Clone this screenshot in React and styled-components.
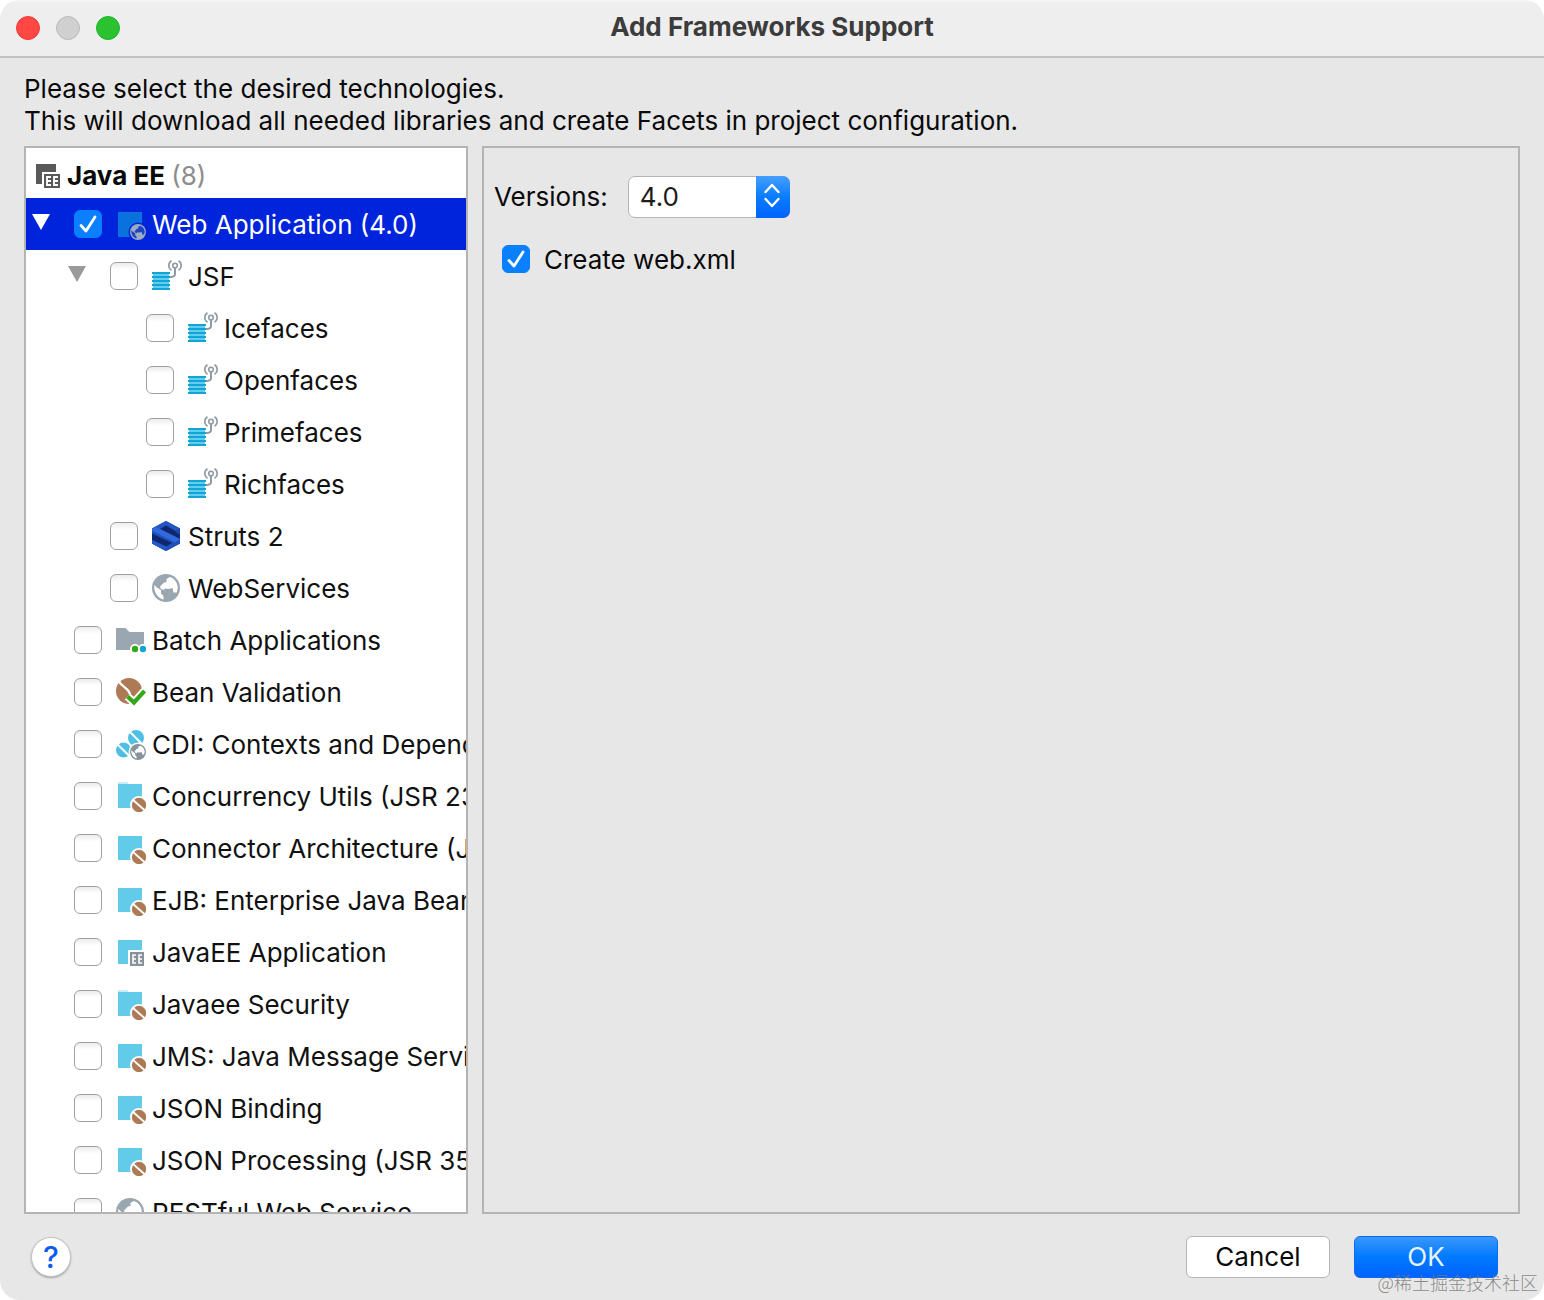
import { useState } from "react";
import styled, { createGlobalStyle, css } from "styled-components";

const GlobalStyle = createGlobalStyle`
  * {
    box-sizing: border-box;
  }

  body {
    margin: 0;
    background: #fff;
    color: #0a0a0a;
    font-family: Inter, Roboto, "Liberation Sans", sans-serif;
    font-size: 26px;
    line-height: 32px;
  }

  button, select, input {
    margin: 0;
    font: inherit;
    color: inherit;
  }
`;

const Dialog = styled.div`
  position: relative;
  display: flex;
  flex-direction: column;
  height: 100vh;
  background: #e7e7e7;
  border-radius: 20px;
  overflow: hidden;
`;

const TitleBar = styled.header`
  display: grid;
  grid-template-columns: 1fr auto 1fr;
  align-items: center;
  height: 58px;
  padding: 0 16px;
  background: #eeeeee;
  box-shadow: inset 0 2px #f6f6f6;
  border-bottom: 2px solid #c2c2c2;
`;

const Lights = styled.div`
  display: flex;
  gap: 16px;
`;

const Light = styled.button`
  width: 24px;
  height: 24px;
  padding: 0;
  border: 1px solid ${(p) => p.$edge};
  border-radius: 50%;
  background: ${(p) => p.$color};
`;

const Title = styled.h1`
  margin: 0;
  padding-bottom: 2px;
  font-size: 26px;
  font-weight: 700;
  color: #3c3c3c;
`;

const Intro = styled.p`
  margin: 0;
  padding: 15px 24px 9px;
`;

const Panels = styled.main`
  display: flex;
  flex: 1;
  gap: 14px;
  min-height: 0;
  padding: 0 24px;
`;

const panel = css`
  border: 2px solid #b4b4b4;
  overflow: hidden;
`;

const TreePanel = styled.section`
  ${panel}
  flex: 0 0 444px;
  background: #fff;
`;

const SettingsPanel = styled.section`
  ${panel}
  flex: 1;
  padding: 28px 10px;
`;

const GroupHeader = styled.h2`
  display: flex;
  align-items: center;
  gap: 7px;
  height: 50px;
  margin: 0;
  padding: 6px 10px 0;
  font-size: 26px;
  font-weight: 700;
`;

const Count = styled.span`
  font-weight: 400;
  color: #8c8c8c;
`;

const Tree = styled.ul`
  margin: 0;
  padding: 0;
  list-style: none;
`;

const Row = styled.li`
  display: flex;
  align-items: center;
  height: 52px;
  padding-left: ${(p) => p.$level * 36}px;
  white-space: nowrap;
  background: ${(p) => (p.$selected ? "#0024dc" : "transparent")};
  color: ${(p) => (p.$selected ? "#fff" : "#111")};
`;

const Slot = styled.div`
  display: flex;
  flex: 0 0 48px;
  padding-left: 6px;
`;

const Toggle = styled.button`
  display: flex;
  padding: 0;
  border: 0;
  background: none;
  color: ${(p) => (p.$selected ? "#fff" : "#9a9a9a")};

  svg {
    transform: ${(p) => (p.$open ? "none" : "rotate(-90deg)")};
  }
`;

const RowLabel = styled.label`
  display: flex;
  align-items: center;
  gap: 6px;
  padding-left: 12px;

  svg {
    flex: none;
  }
`;

const RowName = styled.span`
  padding-top: 2px;
`;

const CheckWrap = styled.span`
  display: grid;
  flex: none;

  > * {
    grid-area: 1 / 1;
  }

  svg {
    pointer-events: none;
  }
`;

const CheckInput = styled.input`
  appearance: none;
  width: 28px;
  height: 28px;
  border: 1px solid #a0a0a0;
  border-radius: 6px;
  background: linear-gradient(#ececec, #fff 7px);

  &:checked {
    border-color: #0a80ff;
    background: #0a80ff;
  }
`;

const VersionRow = styled.div`
  display: flex;
  align-items: center;
  gap: 20px;
`;

const SelectWrap = styled.span`
  display: grid;
  width: 162px;

  > * {
    grid-area: 1 / 1;
  }

  svg {
    justify-self: end;
    pointer-events: none;
  }
`;

const Select = styled.select`
  appearance: none;
  height: 42px;
  padding: 0 46px 0 11px;
  border: 1px solid #b4b4b4;
  border-radius: 7px;
  background: #fff;
  color: #1c1c1c;
`;

const Option = styled.label`
  display: flex;
  align-items: center;
  gap: 14px;
  padding: 24px 8px;
`;

const Footer = styled.footer`
  display: flex;
  align-items: center;
  gap: 24px;
  height: 86px;
  padding: 0 46px 0 31px;
`;

const HelpButton = styled.button`
  width: 40px;
  height: 40px;
  margin-right: auto;
  padding: 0;
  border: 1px solid #c4c4c4;
  border-radius: 50%;
  background: #fff;
  box-shadow: 0 1px 2px rgba(0, 0, 0, 0.3);
  font-size: 30px;
  font-weight: 500;
  color: #0a5cf0;
`;

const Button = styled.button`
  width: 144px;
  height: 42px;
  padding: 0;
  border: 1px solid ${(p) => (p.$primary ? "#0a6cf5" : "#b4b4b4")};
  border-radius: 6px;
  background: ${(p) =>
    p.$primary ? "linear-gradient(#3a98fb, #007aff 50%, #0062ff)" : "#fff"};
  color: ${(p) => (p.$primary ? "#e8f2ff" : "#0a0a0a")};
`;

const Watermark = styled.span`
  position: absolute;
  right: 6px;
  bottom: 5px;
  font: 300 18px/26px "Noto Sans CJK SC", sans-serif;
  color: rgba(120, 120, 120, 0.85);
  pointer-events: none;
`;

function Check({ id, checked, onChange }) {
  return (
    <CheckWrap>
      <CheckInput id={id} type="checkbox" checked={checked} onChange={onChange} />
      {checked && (
        <svg width="28" height="28" viewBox="0 0 28 28" fill="none">
          <path
            d="M7 15.5 12 21 21 7"
            stroke="#fff"
            strokeWidth="2.8"
            strokeLinecap="round"
            strokeLinejoin="round"
          />
        </svg>
      )}
    </CheckWrap>
  );
}

function Icon({ children }) {
  return (
    <svg width="32" height="32" viewBox="0 0 32 32" fill="none" aria-hidden="true">
      {children}
    </svg>
  );
}

// drawn for a 28px circle with its centre at 0,0
function GlobeShape({ ring = "#9aa7b0", land = "#fff" }) {
  return (
    <>
      <circle r="14" fill={ring} />
      <path
        d="M-11.7-3C-12.5 3-9 10-2.500 11.500V8L-5 5.500V2L-8.500 0Z"
        fill={land}
      />
      <path
        d="M-6-1.500-2-5.500.5-6V-9L4-11C8.500-9.500 11.500-5.500 11.800-.5L10.800 4.500H7.500L6.500 0 2.500 1-1 .5-2 2-5 1Z"
        fill={land}
      />
    </>
  );
}

function GlobeIcon() {
  return (
    <Icon>
      <g transform="translate(16 16)">
        <GlobeShape />
      </g>
    </Icon>
  );
}

function WebIcon() {
  return (
    <Icon>
      <path d="M4 4h24v25H4z" fill="#0a72dc" />
      <circle cx="24" cy="24" r="9.500" fill="#0024dc" />
      <g transform="translate(24 24) scale(.57)">
        <GlobeShape ring="#9dabc0" land="#1a44c8" />
      </g>
    </Icon>
  );
}

function JsfIcon() {
  return (
    <Icon>
      <path d="M3 12h16v18H3z" fill="#62cdf0" />
      <path d="M2 13h18M2 17h18M2 21h18M2 25h18M2 29h18" stroke="#12a5d3" strokeWidth="2" />
      <g stroke="#8e9ba5" strokeWidth="1.600">
        <circle cx="25" cy="5.500" r="2.300" />
        <path d="M25 8v6Q25 17 20 17" strokeWidth="2" />
        <path d="M21.500.8Q18.800 2.500 18.800 5.500t2.700 4.700M28.500.8Q31.200 2.500 31.200 5.500t-2.700 4.700" />
      </g>
    </Icon>
  );
}

function StrutsIcon() {
  return (
    <Icon>
      <path d="M16 1 30 8.500v15L16 31 2 23.500v-15z" fill="#10276f" />
      <path d="M16 1 30 8.500 25.500 11 16 5.500 10 9l-8-.5z" fill="#2257c4" />
      <path d="M30 8.500v6L25.500 12v-1z" fill="#1c48ae" />
      <path d="M2 8.500 10 9l20 10v4.500L16 31 2 23.500V20l14 6.500 6-3.500L2 13.500z" fill="#1f50b8" />
      <path d="M2 8.500 6 7l24 12-5 3.500L2 10.500z" fill="#2f69dc" />
      <path d="M16 26.500V31L2 23.500V20z" fill="#2459c8" />
    </Icon>
  );
}

function BatchIcon() {
  return (
    <Icon>
      <path d="M2 4h9.500l4 4H30v18H2z" fill="#9aa7b0" />
      <circle cx="21" cy="25" r="5" fill="#fff" />
      <circle cx="29" cy="25" r="5" fill="#fff" />
      <circle cx="21" cy="25" r="3.200" fill="#35a818" />
      <circle cx="29" cy="25" r="3.200" fill="#12a5d3" />
    </Icon>
  );
}

function BeanValidationIcon() {
  return (
    <Icon>
      <circle cx="15" cy="15" r="13" fill="#ae7a55" />
      <path d="M4.500 4.500C7 11 14 11 16 18" stroke="#fff" strokeWidth="2.400" />
      <path d="m13.500 20.500 6.500 6L30.500 15" stroke="#fff" strokeWidth="8" />
      <path d="m13.500 20.500 6.500 6L30.500 15" stroke="#35a818" strokeWidth="4.200" />
    </Icon>
  );
}

function CdiIcon() {
  return (
    <Icon>
      <circle cx="22" cy="10" r="8" fill="#4fbfe6" />
      <circle cx="9.500" cy="22" r="7.500" fill="#4fbfe6" />
      <path d="m15.500 3.500 13 13M3 16l13 12.500" stroke="#fff" strokeWidth="2" />
      <circle cx="24" cy="24" r="9.500" fill="#fff" />
      <g transform="translate(24 24) scale(.57)">
        <GlobeShape ring="#87939a" />
      </g>
    </Icon>
  );
}

function BeanModuleIcon({ tab }) {
  return (
    <Icon>
      {tab && <path d="M4 2h10v3H4z" fill="#c8ecf8" />}
      <path d="M4 4h24v24H4z" fill="#63cbea" />
      <circle cx="25" cy="25" r="9" fill="#fff" />
      <circle cx="25" cy="25" r="7.200" fill="#ae7a55" />
      <path d="m18.500 19.500 13 11.500" stroke="#fff" strokeWidth="1.800" />
    </Icon>
  );
}

function EeModuleIcon() {
  return (
    <Icon>
      <path d="M4 4h24v24H4z" fill="#63cbea" />
      <path d="M14 14h18v18H14z" fill="#fff" />
      <path d="M16 16h14v14H16z" fill="#87939a" />
      <path d="M22 19h-3v8h3M19 23h3M28 19h-3v8h3M25 23h3" stroke="#fff" strokeWidth="1.600" />
    </Icon>
  );
}

function JavaEeIcon() {
  return (
    <svg width="24" height="24" viewBox="0 0 24 24" fill="none" aria-hidden="true">
      <path d="M0 0h20v20H0z" fill="#595959" />
      <path d="M6 8h18v16H6z" fill="#fff" />
      <path d="M8 10h16v14H8z" fill="#595959" />
      <path d="M15 13h-4v8h4M11 17h4M22 13h-4v8h4M18 17h4" stroke="#fff" strokeWidth="1.800" />
    </svg>
  );
}

const frameworks = [
  { id: "web", level: 0, name: "Web Application (4.0)", icon: <WebIcon />, branch: true },
  { id: "jsf", level: 1, name: "JSF", icon: <JsfIcon />, branch: true, parents: ["web"] },
  { id: "icefaces", level: 2, name: "Icefaces", icon: <JsfIcon />, parents: ["web", "jsf"] },
  { id: "openfaces", level: 2, name: "Openfaces", icon: <JsfIcon />, parents: ["web", "jsf"] },
  { id: "primefaces", level: 2, name: "Primefaces", icon: <JsfIcon />, parents: ["web", "jsf"] },
  { id: "richfaces", level: 2, name: "Richfaces", icon: <JsfIcon />, parents: ["web", "jsf"] },
  { id: "struts", level: 1, name: "Struts 2", icon: <StrutsIcon />, parents: ["web"] },
  { id: "ws", level: 1, name: "WebServices", icon: <GlobeIcon />, parents: ["web"] },
  { id: "batch", level: 0, name: "Batch Applications", icon: <BatchIcon /> },
  { id: "validation", level: 0, name: "Bean Validation", icon: <BeanValidationIcon /> },
  { id: "cdi", level: 0, name: "CDI: Contexts and Dependency Injection", icon: <CdiIcon /> },
  { id: "concurrency", level: 0, name: "Concurrency Utils (JSR 236)", icon: <BeanModuleIcon tab /> },
  { id: "connector", level: 0, name: "Connector Architecture (JSR 322)", icon: <BeanModuleIcon /> },
  { id: "ejb", level: 0, name: "EJB: Enterprise Java Beans", icon: <BeanModuleIcon /> },
  { id: "app", level: 0, name: "JavaEE Application", icon: <EeModuleIcon /> },
  { id: "security", level: 0, name: "Javaee Security", icon: <BeanModuleIcon tab /> },
  { id: "jms", level: 0, name: "JMS: Java Message Service", icon: <BeanModuleIcon /> },
  { id: "jsonb", level: 0, name: "JSON Binding", icon: <BeanModuleIcon /> },
  { id: "jsonp", level: 0, name: "JSON Processing (JSR 353)", icon: <BeanModuleIcon /> },
  { id: "rest", level: 0, name: "RESTful Web Service", icon: <GlobeIcon /> },
];

function App() {
  const [checked, setChecked] = useState({ web: true });
  const [closed, setClosed] = useState({});
  const [version, setVersion] = useState("4.0");
  const [createXml, setCreateXml] = useState(true);

  const rows = frameworks.filter((f) => !(f.parents || []).some((p) => closed[p]));

  return (
    <>
      <GlobalStyle />
      <Dialog role="dialog" aria-labelledby="title">
        <TitleBar>
          <Lights>
            <Light aria-label="Close" $color="#ff4744" $edge="#f03c3a" />
            <Light aria-label="Minimize" $color="#d0d0d0" $edge="#bababa" disabled />
            <Light aria-label="Zoom" $color="#2ac231" $edge="#22b32a" />
          </Lights>
          <Title id="title">Add Frameworks Support</Title>
        </TitleBar>

        <Intro>
          Please select the desired technologies.
          <br />
          This will download all needed libraries and create Facets in project configuration.
        </Intro>

        <Panels>
          <TreePanel>
            <GroupHeader>
              <JavaEeIcon />
              <span>
                Java EE <Count>(8)</Count>
              </span>
            </GroupHeader>
            <Tree>
              {rows.map((f) => (
                <Row key={f.id} $level={f.level} $selected={f.id === "web"}>
                  <Slot>
                    {f.branch && (
                      <Toggle
                        aria-label={`Toggle ${f.name}`}
                        aria-expanded={!closed[f.id]}
                        $open={!closed[f.id]}
                        $selected={f.id === "web"}
                        onClick={() => setClosed({ ...closed, [f.id]: !closed[f.id] })}
                      >
                        <svg width="18" height="24" viewBox="0 0 18 24">
                          <path d="M0 2h18L9 18z" fill="currentColor" />
                        </svg>
                      </Toggle>
                    )}
                  </Slot>
                  <Check
                    id={f.id}
                    checked={!!checked[f.id]}
                    onChange={(e) => setChecked({ ...checked, [f.id]: e.target.checked })}
                  />
                  <RowLabel htmlFor={f.id}>
                    {f.icon}
                    <RowName>{f.name}</RowName>
                  </RowLabel>
                </Row>
              ))}
            </Tree>
          </TreePanel>

          <SettingsPanel>
            <VersionRow>
              <label htmlFor="version">Versions:</label>
              <SelectWrap>
                <Select id="version" value={version} onChange={(e) => setVersion(e.target.value)}>
                  <option>4.0</option>
                  <option>3.1</option>
                  <option>3.0</option>
                  <option>2.5</option>
                </Select>
                <svg width="34" height="42" viewBox="0 0 34 42" fill="none">
                  <defs>
                    <linearGradient id="stepper" x1="0" y1="0" x2="0" y2="1">
                      <stop offset="0" stopColor="#459ffb" />
                      <stop offset=".5" stopColor="#0a7cff" />
                      <stop offset="1" stopColor="#0062ff" />
                    </linearGradient>
                  </defs>
                  <path d="M0 0h27a7 7 0 0 1 7 7v28a7 7 0 0 1-7 7H0z" fill="url(#stepper)" />
                  <path
                    d="m9.500 16 6.500-7 6.500 7M9.500 23l6.500 7 6.500-7"
                    stroke="#fff"
                    strokeWidth="2.400"
                    strokeLinecap="round"
                    strokeLinejoin="round"
                  />
                </svg>
              </SelectWrap>
            </VersionRow>
            <Option>
              <Check
                id="create-xml"
                checked={createXml}
                onChange={(e) => setCreateXml(e.target.checked)}
              />
              <RowName>Create web.xml</RowName>
            </Option>
          </SettingsPanel>
        </Panels>

        <Footer>
          <HelpButton aria-label="Help">?</HelpButton>
          <Button>Cancel</Button>
          <Button $primary>OK</Button>
        </Footer>
        <Watermark>@稀土掘金技术社区</Watermark>
      </Dialog>
    </>
  );
}

export default App;
